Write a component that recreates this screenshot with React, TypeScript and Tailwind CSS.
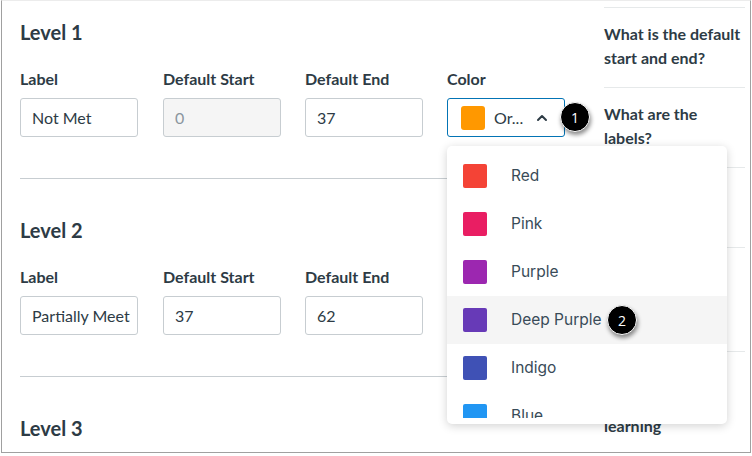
import { ChevronUp } from "lucide-react"

const levels = [
  { name: "Level 1", label: "Not Met", start: "0", end: "37", startDisabled: true, color: true },
  { name: "Level 2", label: "Partially Meet", start: "37", end: "62", startDisabled: false, color: false },
]

const colors = [
  { name: "Red", hex: "bg-[#f44336]" },
  { name: "Pink", hex: "bg-[#e91e63]" },
  { name: "Purple", hex: "bg-[#9c27b0]" },
  { name: "Deep Purple", hex: "bg-[#673ab7]" },
  { name: "Indigo", hex: "bg-[#3f51b5]" },
  { name: "Blue", hex: "bg-[#2196f3]" },
]

const questions = [
  "What is the default start and end?",
  "What are the labels?",
  "Can I change the colors?",
  "Where are levels displayed in Gradebook?",
  "How are mastery levels used in learning",
]

function Badge({ n }: { n: number }) {
  return (
    <div className="w-[30px] h-[30px] rounded-full bg-black border-[1.5px] border-white shadow-[1px_3px_4px_rgba(0,0,0,0.45)] flex items-center justify-center text-white text-[14px] font-['Open_Sans',sans-serif]">
      {n}
    </div>
  )
}

function Field({ label, children }: { label: string; children: React.ReactNode }) {
  return (
    <div>
      <div className="h-[20px] leading-[20px] text-[16px] font-bold text-[#2d3b45]">{label}</div>
      <div className="mt-[9px]">{children}</div>
    </div>
  )
}

function Input({ value, disabled }: { value: string; disabled?: boolean }) {
  return (
    <div
      className={`w-[118px] h-[39px] border border-[#c7cdd1] rounded-[3px] px-[11px] flex items-center text-[16px] whitespace-nowrap overflow-hidden ${
        disabled ? "bg-[#f5f5f5] text-[#8b969e]" : "bg-white text-[#2d3b45]"
      }`}
    >
      {value}
    </div>
  )
}

export default function App() {
  return (
    <div className="relative w-[752px] h-[456px] bg-white font-['Lato','Liberation_Sans',sans-serif]">
      <div className="ml-px w-[750px] h-[453px] border-x border-b border-[#a0a0a0] border-t border-t-[#ececec] overflow-hidden flex">
        {/* Main form */}
        <div className="w-[584px] pl-[18px] pt-[19px] shrink-0">
          {levels.map((lvl) => (
            <div key={lvl.name} className="mb-[39px]">
              <h2 className="h-[24px] leading-[24px] text-[20px] font-bold text-[#2d3b45]">{lvl.name}</h2>
              <div className="mt-[25px] grid grid-cols-[143px_142px_142px_118px]">
                <Field label="Label">
                  <Input value={lvl.label} />
                </Field>
                <Field label="Default Start">
                  <Input value={lvl.start} disabled={lvl.startDisabled} />
                </Field>
                <Field label="Default End">
                  <Input value={lvl.end} />
                </Field>
                {lvl.color && (
                  <Field label="Color">
                    <div className="w-[118px] h-[39px] border border-[#0374b5] rounded-[3px] bg-white flex items-center pl-[13px] pr-[14px]">
                      <span className="w-[24px] h-[24px] rounded-[3px] bg-[#ff9800]" />
                      <span className="ml-[9px] text-[16px] text-[#2d3b45]">Or...</span>
                      <ChevronUp className="ml-auto w-[16px] h-[16px] text-[#2d3b45]" strokeWidth={3} />
                    </div>
                  </Field>
                )}
              </div>
              <div className="mt-[41px] h-px bg-[#c7cdd1]" />
            </div>
          ))}
          <h2 className="h-[24px] leading-[24px] text-[20px] font-bold text-[#2d3b45]">Level 3</h2>
        </div>

        {/* Help sidebar */}
        <div className="ml-[18px] w-[141px] shrink-0 pt-[6px]">
          {questions.map((q) => (
            <div key={q} className="border-t border-[#e6e9ea] pt-[14px] pb-[17px]">
              <p className="text-[16px] leading-[24px] font-bold text-[#2d3b45]">{q}</p>
            </div>
          ))}
        </div>
      </div>

      {/* Badge 1 beside the color select */}
      <div className="absolute left-[560px] top-[102px]">
        <Badge n={1} />
      </div>

      {/* Color dropdown menu */}
      <div className="absolute left-[447px] top-[146px] w-[280px] h-[278px] bg-white rounded-[5px] shadow-[0_2px_10px_rgba(0,0,0,0.18)] pt-[6px]">
        <ul className="h-[266px] overflow-hidden font-['Inter','Open_Sans',sans-serif]">
          {colors.map((c) => (
            <li
              key={c.name}
              className={`h-[48px] flex items-center pl-[16px] ${c.name === "Deep Purple" ? "bg-[#f5f5f5]" : ""}`}
            >
              <span className={`w-[24px] h-[24px] rounded-[2px] ${c.hex}`} />
              <span className="ml-[24px] text-[15.5px] text-[#394b58]">{c.name}</span>
            </li>
          ))}
        </ul>
      </div>

      {/* Badge 2 beside Deep Purple */}
      <div className="absolute left-[607px] top-[305px]">
        <Badge n={2} />
      </div>
    </div>
  )
}
